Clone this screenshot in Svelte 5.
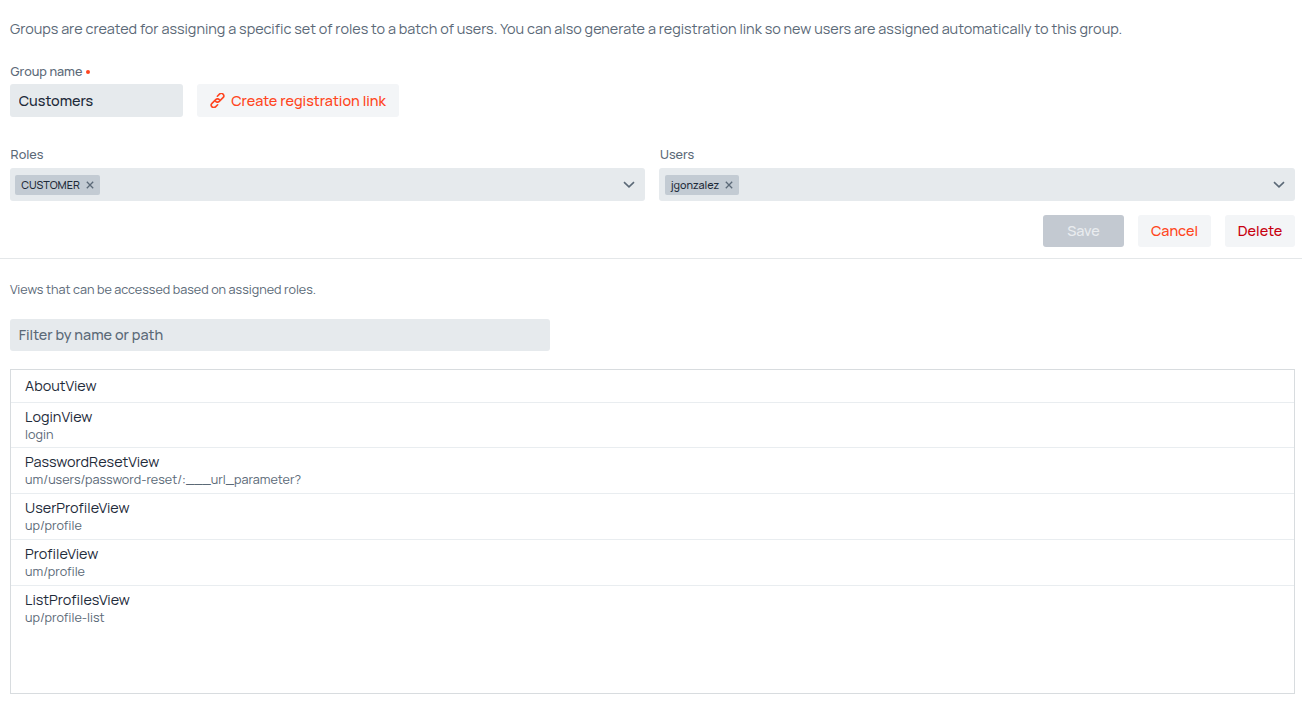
<script>
    let groupName = 'Customers';
    let filter = '';
    const roles = ['CUSTOMER'];
    const users = ['jgonzalez'];
    const views = [
        { name: 'AboutView', path: '' },
        { name: 'LoginView', path: 'login' },
        { name: 'PasswordResetView', path: 'um/users/password-reset/:___url_parameter?' },
        { name: 'UserProfileView', path: 'up/profile' },
        { name: 'ProfileView', path: 'um/profile' },
        { name: 'ListProfilesView', path: 'up/profile-list' }
    ];
    const selects = [
        { label: 'Roles', items: roles },
        { label: 'Users', items: users }
    ];

    $: shownViews = views.filter(v => (v.name + ' ' + v.path).toLowerCase().includes(filter.toLowerCase()));
</script>

<section class="group-form">
    <p class="intro">Groups are created for assigning a specific set of roles to a batch of users. You can also generate a registration link so new users are assigned automatically to this group.</p>

    <div class="label name-label">Group name<span class="required"></span></div>
    <div class="name-row">
        <input class="field name-field" bind:value={groupName}>
        <button class="button link-button">
            <svg width="15" height="15" viewBox="0 0 15 15">
                <g transform="rotate(-45 7.5 7.5)">
                    <path d="M4.6 10.6 H1.6 A2.5 2.5 0 0 1 1.6 5.6 H6.9 A2.5 2.5 0 0 1 9.3 8.4"/>
                    <path d="M10.4 4.4 H13.4 A2.5 2.5 0 0 1 13.4 9.4 H8.1 A2.5 2.5 0 0 1 5.7 6.6"/>
                </g>
            </svg>
            <span>Create registration link</span>
        </button>
    </div>

    <div class="select-row">
        {#each selects as select}
        <div>
            <div class="label">{select.label}</div>
            <div class="field select">
                {#each select.items as item}
                <div class="chip">
                    <span>{item}</span>
                    <svg width="8" height="8" viewBox="0 0 8 8"><path d="M0.8 0.8 L7.2 7.2 M7.2 0.8 L0.8 7.2"/></svg>
                </div>
                {/each}
                <svg class="arrow" width="12" height="8" viewBox="0 0 12 8"><path d="M1 1.2 L6 5.8 L11 1.2"/></svg>
            </div>
        </div>
        {/each}
    </div>

    <div class="actions">
        <button class="button save" disabled>Save</button>
        <button class="button cancel">Cancel</button>
        <button class="button delete">Delete</button>
    </div>
</section>

<section class="views">
    <p class="hint">Views that can be accessed based on assigned roles.</p>
    <input class="field filter" placeholder="Filter by name or path" bind:value={filter}>

    <div class="list">
        {#each shownViews as view}
        <div class="row" class:single={!view.path}>
            <div class="view-name">{view.name}</div>
            {#if view.path}
            <div class="view-path">{view.path}</div>
            {/if}
        </div>
        {/each}
    </div>
</section>

<style>
    :global(body) {
        background: #fff;
        font-family: Manrope, Inter, sans-serif;
        font-size: 14.4px;
        color: #5b6977;
    }

    p {
        margin: 0;
    }

    .group-form {
        box-sizing: border-box;
        height: 259px;
        padding: 19px 7px 0 10px;
        border-bottom: 1px solid #e4e7e9;
    }

    .intro {
        height: 20px;
        line-height: 20px;
        white-space: nowrap;
    }

    .label {
        display: flex;
        align-items: center;
        height: 16px;
        margin-bottom: 5px;
        padding-left: 0.6px;
        font-size: 12.6px;
        font-weight: 500;
        line-height: 16px;
    }

    .name-label {
        margin: 25px 0 4px;
    }

    .required {
        width: 4px;
        height: 4px;
        margin-left: 4px;
        border-radius: 50%;
        background: #ff4520;
    }

    .name-row {
        display: flex;
        gap: 14px;
    }

    .field {
        box-sizing: border-box;
        height: 33px;
        padding: 0 8.7px;
        border: none;
        border-radius: 3px;
        background: #e6eaed;
        color: #1e2b3a;
        font-family: inherit;
        font-size: 14.4px;
        font-weight: 500;
    }

    .name-field {
        width: 173px;
    }

    .button {
        display: flex;
        align-items: center;
        justify-content: center;
        box-sizing: border-box;
        height: 32px;
        padding: 0 0 1px;
        border: none;
        border-radius: 3px;
        background: #f3f5f7;
        color: #ff4520;
        font-family: inherit;
        font-size: 14.4px;
        font-weight: 500;
        white-space: nowrap;
    }

    .link-button {
        gap: 6px;
        width: 202px;
        height: 33px;
        padding: 0;
    }

    .link-button path {
        fill: none;
        stroke: currentColor;
        stroke-width: 1.6;
        stroke-linecap: round;
    }

    .select-row {
        display: grid;
        grid-template-columns: 635.4fr 635.6fr;
        column-gap: 14px;
        margin-top: 30px;
    }

    .select {
        display: flex;
        align-items: center;
        padding: 0 10.5px 0 5.2px;
    }

    .chip {
        display: flex;
        align-items: center;
        gap: 6px;
        height: 20px;
        padding: 0 6.1px;
        border-radius: 2px;
        background: #c3cbd3;
        font-size: 10.8px;
    }

    .chip path {
        fill: none;
        stroke: #5b6977;
        stroke-width: 1.3;
    }

    .arrow {
        margin-left: auto;
    }

    .arrow path {
        fill: none;
        stroke: #5b6977;
        stroke-width: 1.6;
    }

    .actions {
        display: flex;
        justify-content: flex-end;
        gap: 14px;
        margin-top: 14px;
    }

    .save {
        width: 81px;
        background: #c3c9d1;
        color: #e9ecef;
    }

    .cancel {
        width: 73px;
    }

    .delete {
        width: 70px;
        color: #c8000f;
    }

    .views {
        padding: 23px 7px 0 10px;
    }

    .hint {
        height: 16px;
        font-size: 12.6px;
        line-height: 16px;
    }

    .filter {
        display: block;
        width: 540px;
        height: 32px;
        margin-top: 21px;
        padding-bottom: 1px;
    }

    .filter::placeholder {
        color: #5b6977;
        opacity: 1;
    }

    .list {
        box-sizing: border-box;
        height: 325px;
        margin-top: 18px;
        border: 1px solid #d8dcdf;
    }

    .row {
        padding: 4.1px 14.1px 4.7px;
        border-bottom: 1px solid #e9edf0;
    }

    .row.single {
        padding: 6px 14.1px 5.5px;
    }

    .row:last-child {
        border-bottom: none;
    }

    .view-name {
        color: #1e2b3a;
        line-height: 20px;
    }

    .view-path {
        font-size: 12.6px;
        line-height: 16px;
    }
</style>
